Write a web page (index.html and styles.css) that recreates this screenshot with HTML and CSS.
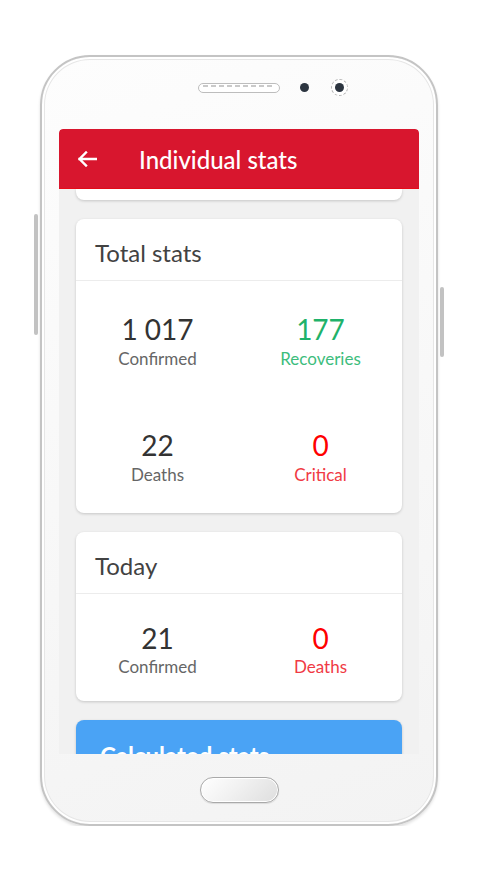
FILE: index.html
```html
<!DOCTYPE html>
<html lang="en">
<head>
<meta charset="utf-8">
<title>Individual stats</title>
<link rel="stylesheet" href="styles.css">
</head>
<body>
<div class="phone">
  <span class="side-btn side-left"></span>
  <span class="side-btn side-right"></span>
  <div class="top-bezel">
    <div></div>
    <div class="speaker"></div>
    <div class="cams"><span class="dot"></span><span class="camera"><span class="lens"></span></span></div>
  </div>
  <div class="screen">
    <header class="appbar">
      <svg class="back" width="20" height="16" viewBox="0 0 20 16" aria-hidden="true">
        <path d="M19 8H2.5M9 1.5L2.5 8L9 14.5" fill="none" stroke="#fff" stroke-width="2.4" stroke-linecap="square" stroke-linejoin="miter"/>
      </svg>
      <h1 class="title">Individual stats</h1>
    </header>
    <main class="content">
      <div class="card card-tail"></div>
      <section class="card">
        <h2 class="card-title">Total stats</h2>
        <div class="stats stats-total">
          <div class="stat"><span class="num">1 017</span><span class="label">Confirmed</span></div>
          <div class="stat green"><span class="num">177</span><span class="label">Recoveries</span></div>
          <div class="stat"><span class="num">22</span><span class="label">Deaths</span></div>
          <div class="stat red"><span class="num">0</span><span class="label">Critical</span></div>
        </div>
      </section>
      <section class="card">
        <h2 class="card-title">Today</h2>
        <div class="stats stats-today">
          <div class="stat"><span class="num">21</span><span class="label">Confirmed</span></div>
          <div class="stat red"><span class="num">0</span><span class="label">Deaths</span></div>
        </div>
      </section>
      <section class="card card-blue">
        <h2 class="card-title">Calculated stats</h2>
      </section>
    </main>
  </div>
  <div class="bottom-bezel">
    <div class="home"></div>
  </div>
</div>
</body>
</html>
```
FILE: styles.css
```css
html, body {
  margin: 0;
  padding: 0;
  background: #fff;
  font-family: Lato, "Noto Sans", "Liberation Sans", sans-serif;
}

.phone {
  position: relative;
  box-sizing: border-box;
  width: 398px;
  height: 771px;
  margin: 55px 0 0 40px;
  border: 2px solid #c4c4c4;
  border-radius: 50px;
  background: linear-gradient(160deg, #fdfdfd 0%, #f7f7f7 60%, #f3f3f3 100%);
  box-shadow: inset 0 0 0 2px #fff, inset 0 0 0 3px #e6e6e6, 0 2px 3px rgba(0,0,0,0.12);
  display: flex;
  flex-direction: column;
  align-items: center;
}

.side-btn {
  position: absolute;
  width: 4px;
  background: #c2c2c2;
  border-radius: 2px;
}
.side-left { left: -8px; top: 157px; height: 121px; }
.side-right { right: -8px; top: 230px; height: 70px; }

.top-bezel {
  width: 100%;
  margin-top: 22px;
  height: 10px;
  display: grid;
  grid-template-columns: 1fr 82px 1fr;
  align-items: center;
}

.speaker {
  box-sizing: border-box;
  height: 10px;
  border: 1px solid #bdbdbd;
  border-radius: 5px;
  background: repeating-linear-gradient(90deg, #c9c9c9 0 5px, transparent 5px 8px) 4px 1px / 72px 2px no-repeat, #fff;
}

.cams {
  display: flex;
  align-items: center;
  padding-left: 20px;
}
.dot {
  width: 9px;
  height: 9px;
  border-radius: 50%;
  background: #2c3540;
}
.camera {
  margin-left: 22px;
  box-sizing: border-box;
  width: 17px;
  height: 17px;
  border-radius: 50%;
  border: 1px dashed #b5b5b5;
  display: flex;
  align-items: center;
  justify-content: center;
  background: #fff;
}
.lens {
  width: 9px;
  height: 9px;
  border-radius: 50%;
  background: #2c3540;
}

.screen {
  margin-top: 40px;
  width: 360px;
  height: 625px;
  overflow: hidden;
  background: #f1f1f1;
  border-radius: 4px 4px 0 0;
  display: flex;
  flex-direction: column;
}

.appbar {
  flex: none;
  height: 60px;
  background: #d8162e;
  border-bottom: 1px solid #e80c18;
  box-sizing: border-box;
  display: flex;
  align-items: center;
  padding-left: 18px;
  border-radius: 4px 4px 0 0;
}
.back {
  display: block;
  margin-top: 1px;
}
.title {
  margin: 2px 0 0 42px;
  color: #fff;
  font-size: 24px;
  font-weight: 500;
  line-height: 60px;
}

.content {
  flex: 1;
  padding: 0 17px;
  display: flex;
  flex-direction: column;
  gap: 19px;
}

.card {
  flex: none;
  background: #fff;
  border-radius: 8px;
  box-shadow: 0 1px 3px rgba(0,0,0,0.18);
}
.card-tail {
  height: 11px;
  border-radius: 0 0 8px 8px;
}

.card-title {
  margin: 0;
  box-sizing: border-box;
  height: 62px;
  padding: 17px 19px 0;
  font-size: 24px;
  font-weight: 400;
  line-height: 34px;
  color: #424242;
  border-bottom: 1px solid #ececec;
}

.stats {
  display: grid;
  grid-template-columns: 1fr 1fr;
}
.stats-total { grid-auto-rows: 116px; }
.stats-today { grid-auto-rows: 107px; }

.stat {
  display: flex;
  flex-direction: column;
  align-items: center;
  padding-top: 32px;
  color: #333;
}
.stats-today .stat { padding-top: 28px; }

.num {
  font-size: 28px;
  line-height: 32px;
  color: #333;
}
.label {
  margin-top: 3px;
  font-size: 17px;
  line-height: 22px;
  color: #666;
}
.stats-today .label { margin-top: 2px; }

.green .num { color: #1fb26a; }
.green .label { color: #3dbd7c; }
.red .num { color: #ff0000; }
.red .label { color: #f03a44; }

.card-blue {
  background: #4aa3f5;
  height: 120px;
}
.card-blue .card-title {
  color: #fff;
  font-weight: 700;
  border-bottom: none;
  padding-left: 24px;
  padding-top: 19px;
}

.bottom-bezel {
  margin-top: 23px;
  display: flex;
  justify-content: center;
}
.home {
  box-sizing: border-box;
  width: 79px;
  height: 26px;
  border-radius: 13px;
  border: 1px solid #a9a9a9;
  background: linear-gradient(135deg, #ffffff 0%, #f1f1f1 45%, #dedede 100%);
  box-shadow: inset 0 0 0 1px #fff, 0 1px 1px rgba(0,0,0,0.1);
}
```
